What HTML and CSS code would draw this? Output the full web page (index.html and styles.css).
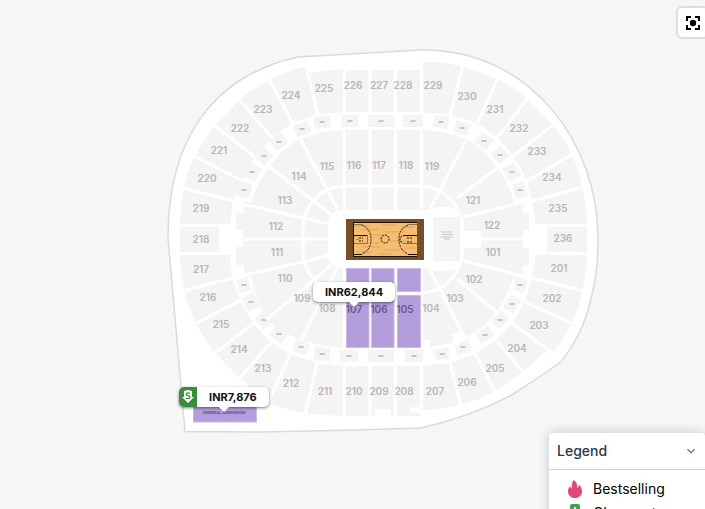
FILE: index.html
```html
<!DOCTYPE html>
<html lang="en">
<head>
<meta charset="utf-8">
<title>Seat map</title>
<link rel="stylesheet" href="styles.css">
</head>
<body>
<main class="map">
  <div class="stage">
    <svg class="venue" viewBox="0 0 705 509" role="img" aria-label="Venue sections">
      <path class="outline" d="M298 57L420 50C530 48 598 143 598 238Q598 270 593 290Q589 310 582 327Q573 346 561 362L530 383L510 396Q470 417 421 428L355 430L260 432L185 431.500L168 238C168 140 212 76 298 57Z"/>
      <!-- upper bowl -->
      <path class="block" d="M309 73L343 69V70H421V62Q443 61 462 67Q481 72 498 79Q514 88 527 99L553 125Q565 140 572 155Q579 170 582 187Q587 205 587 225V253Q587 272 582 292Q579 308 572 323L554 352H545L523 372L495 392Q478 400 460 405Q441 410 421 410V416H343Q324 416 306 413Q287 410 268 403L240 378L215 353Q204 339 196 323Q188 308 184 290Q180 273 180 253V225Q180 207 184 188Q187 172 195 157Q203 140 215 126L239 100Q253 89 269 80Q286 71 304 67Z"/>
      <path class="gap" d="M344 112H421L450 115L477 123L497 137L513 155L527 180L532 200L536 225V253L532 278L525 302L512 323L496 340L475 354L450 363L421 366H344L317 363L290 354L270 342L253 323L240 300L232 278L230 253V225L233 200L243 180L255 157L272 138L292 123L317 114Z"/>
      <g class="cut">
        <path d="M306 66L318 115M269 79L293 124M239 99L273 139M214 125L256 158M194 156L244 182M182 188L234 201M179 225.500H234M179 253.500H234M182 291L233 278M195 324L241 300M214 354L254 323M239 379L271 342M267 405L291 353M305 415L317 363M344.500 67V114M370 68V114M395.500 68V114M421.500 60V114M463 65L450 117M498 78L477 124M528 98L497 138M554 124L513 156M573 154L527 181M584 187L532 201M534 225.500H589M534 253.500H589M584 291L532 278M573 324L525 302M554 354L512 323M524 373L496 340M496 394L475 353M461 407L450 362M344.500 364V418M370 364V418M395.500 364V418M421.500 364V418"/>
      </g>
      <path class="gap" d="M219 225H235V254H219ZM535 225H547V254H535ZM375 409H391V417H375ZM410 407H422V413H410Z"/>
      <!-- suites -->
      <g id="suites"></g>
      <!-- lower bowl -->
      <path class="block" d="M344 130H421Q446 131 467 139Q484 149 497 167Q509 183 514 203L529 199V278L514 276Q508 295 497 312Q484 328 465 338Q446 346 421 348H344Q321 346 301 340Q283 333 270 323Q256 302 251 276L236 278V199L251 203Q257 182 270 166Q284 147 300 139Q321 131 344 130Z"/>
      <g class="cut">
        <path d="M235 202L303 218L330 224M266 164L311 199L332 215M300 138L338 210M236 239H330M235 277L303 262L330 255M266 320L314 280L332 264M301 341L337 268M344.500 128V350M370 128V350M395.500 128V350M421.500 128V350M468 137L430 209M501 165L457 198M524 202L463 217M464 239H530M464 261L530 278M457 279L499 314M466 340L429 268"/>
        <rect x="303" y="186" width="159" height="107" rx="42"/>
      </g>
      <path class="gap" d="M236 198H244V213H236ZM234 230H243V247H234ZM236 265H244V279H236ZM523 198H530V213H523ZM523 230H537V248H523ZM523 265H530V279H523ZM464 231H481V248H464ZM421 340H430V349H421ZM452 334L462 331L466 341L454 346Z"/>
      <rect class="gap" x="328" y="210" width="120" height="58" rx="13"/>
      <rect class="gap" x="423" y="207" width="41" height="64" rx="16"/>
      <rect class="block" x="433" y="217" width="27" height="44"/>
      <path class="mark" d="M441 232H452M442 234.500H453M441 237H452M444 239H450"/>
      <!-- available sections -->
      <path class="available" d="M346.500 268.500H369V347.500H346.500ZM371.500 268.500H394V347.500H371.500ZM397.500 268.500H420.500V291.500H397.500ZM397.500 295.500H420.500V347.500H397.500Z"/>
      <path class="divider" d="M346 293.500H395"/>
      <rect class="available" x="193.500" y="405" width="63" height="17"/>
      <!-- court -->
      <rect class="floor" x="346" y="219" width="78" height="41"/>
      <rect class="wood" x="353" y="222" width="64" height="35"/>
      <path class="grain" d="M355 226H370M382 225H396M402 227H414M360 230H378M386 232H405M354 236H366M371 235H383M389 241H410M362 247H381M384 250H399M404 248H416M356 252H372M378 254H391M397 236H409M370 243H379"/>
      <path class="court" d="M353.500 222V257M353 222.500H417M353 256.500H417M353 235.500H367M403 235.500H417M354 254.500H362M408 254.500H417"/>
      <path class="court faint" d="M353 243.500H367M367.500 235V244M403 243.500H417M354 224.500H362M408 224.500H417"/>
      <path class="dots" d="M362 225Q371 229 371 239Q371 250 362 254M408 225Q399 229 399 239Q399 250 408 254M381 239A4 4 0 1 1 389 239A4 4 0 1 1 381 239M402 236Q398 239 402 243M359 238H363M359 241H363M407 238H412M407 242H412"/>
      <path class="hoop" d="M356 239.500H359"/>
      <g id="labels"></g>
      <text class="tiny" x="224" y="414">GENERAL ADMISSION</text>
    </svg>
    <button class="price" type="button" style="left:44.4%;top:55.400%"><span class="amount">INR62,844</span></button>
    <button class="price deal" type="button" style="left:25.400%;top:76%">
      <span class="badge"><svg viewBox="0 0 18 19" aria-hidden="true"><path fill="#fff" d="M5 4L9 3L13 4V10H15L9 16L3 10H5Z"/><path class="dollar" d="M11 6.500Q9 5.200 7.500 6.500Q7 8.500 9 8.700Q11.500 9 10.800 11Q9 12.500 7 11"/></svg></span>
      <span class="amount">INR7,876</span>
    </button>
  </div>
  <button class="reset" type="button" aria-label="Reset view">
    <svg viewBox="0 0 16 16" aria-hidden="true"><path d="M2 6V2H6M10 2H14V6M14 10V14H10M6 14H2V10" fill="none" stroke="#000" stroke-width="2"/><circle cx="8" cy="8" r="3.200"/></svg>
  </button>
  <section class="legend">
    <button class="legend-head" type="button">Legend
      <svg viewBox="0 0 10 10" aria-hidden="true"><path d="M1.500 3.200L5 6.700L8.500 3.200" fill="none" stroke="#64708a" stroke-width="1.300"/></svg>
    </button>
    <ul class="legend-list">
      <li><svg viewBox="0 0 16 20" aria-hidden="true"><path fill="#e0487f" d="M6.500 1C10 3 10.500 6 10 9C11.500 8.500 11.800 7 11.800 5.500C14 7.500 15 10 15 12.500C15 16.500 12 19 8 19C4 19 1 16.500 1 12.500C1 10 2 8.500 3.200 7.300C3.500 8.500 4 9.200 4.800 9.500C4.500 6 5 3 6.500 1Z"/></svg>Bestselling</li>
      <li><svg viewBox="0 0 16 20" aria-hidden="true"><rect x="3" y="1" width="10" height="18" rx="2" fill="#43a047"/><path fill="#fff" d="M7 4H9V10H11L8 14L5 10H7Z"/></svg>Cheapest</li>
    </ul>
  </section>
</main>
<script src="map.js"></script>
</body>
</html>
```
FILE: styles.css
```css
* { box-sizing: border-box; }
body { margin: 0; background: #f5f6f8; font-family: Inter, "Liberation Sans", sans-serif; }
button { font: inherit; border: 0; padding: 0; cursor: pointer; }
.map { position: relative; min-height: 100vh; overflow: hidden; }
.stage { position: relative; width: 100%; }
.venue { display: block; width: 100%; height: auto; }
.outline { fill: #fff; stroke: #d9dadb; stroke-width: 1.5; }
.block { fill: #f4f4f4; }
.gap { fill: #fff; }
.cut { fill: none; stroke: #fff; stroke-width: 3; }
.mark { fill: none; stroke: #b9b9b9; stroke-width: 1; opacity: 0.8; }
.mark.small { stroke-width: 2; }
.available { fill: #b39ddb; stroke: #c9b9e6; stroke-width: 1; }
.divider { stroke: #fff; stroke-width: 3; }
.floor { fill: #7a4f27; }
.wood { fill: #f4bd72; }
.grain { stroke: #dda45c; stroke-width: 1; }
.court { fill: none; stroke: #1a120a; stroke-width: 1; }
.court.faint { opacity: 0.45; }
.dots { fill: none; stroke: #1a120a; stroke-width: 1; stroke-dasharray: 2 1; }
.hoop { stroke: #f0602c; }
.label { font-size: 10px; font-weight: 600; fill: #b6b6b6; text-anchor: middle; }
.label.on { fill: #6a5590; }
.tiny { font-size: 4px; font-weight: 600; fill: #5f4a85; text-anchor: middle; }
.price {
  position: absolute; display: flex; align-items: center; height: 20px;
  background: #fff; border-radius: 5px; color: #111;
  font-size: 11px; font-weight: 700; line-height: 20px;
  box-shadow: 0 1px 3px rgba(0, 0, 0, 0.5);
}
.price::after {
  content: ""; position: absolute; top: 100%; left: 50%; margin-left: -5px;
  border: 5px solid transparent; border-top-color: #fff; border-bottom: 0;
}
.amount { padding: 0 12px; }
.badge { width: 18px; height: 20px; background: #388e3c; border-radius: 5px 0 0 5px; }
.badge svg { display: block; width: 18px; height: 19px; }
.dollar { fill: none; stroke: #388e3c; stroke-width: 1.2; }
.reset {
  position: absolute; top: 6px; right: -4px; width: 33px; height: 33px;
  display: flex; align-items: center; justify-content: center;
  background: #fff; border: 2px solid #dcdee1; border-radius: 6px;
}
.reset svg { width: 16px; height: 16px; }
.legend {
  position: absolute; top: 433px; right: 0; width: 156px;
  background: #fff; border-radius: 4px 4px 0 0; box-shadow: 0 0 12px rgba(0, 0, 0, 0.2);
}
.legend-head {
  display: flex; align-items: center; justify-content: space-between; width: 100%; height: 37px;
  padding: 0 9px 0 8px; background: none; border-bottom: 1px solid #cfd2dc;
  color: #2f3542; font-size: 14px; font-weight: 500; line-height: 36px;
}
.legend-head svg { width: 10px; height: 10px; }
.legend-list { margin: 0; padding: 8px 18px; list-style: none; }
.legend-list li { display: flex; align-items: center; gap: 10px; height: 24px; font-size: 14px; line-height: 22px; padding-bottom: 2px; color: #000; }
.legend-list svg { width: 16px; height: 20px; }
```
FILE: map.js
```js
const NS = "http://www.w3.org/2000/svg";

function add(parent, name, attrs, text) {
  const el = document.createElementNS(NS, name);
  for (const key in attrs) el.setAttribute(key, attrs[key]);
  if (text) el.textContent = text;
  parent.appendChild(el);
}

// centre x, centre y, rotation, width, height
const suites = [
  [244,190,15,14,15],[252,172,30,14,15],[264,156,-48,14,13],[279,142,-34,15,13],[302,129,-20,15,12],
  [322,122,-8,16,12],[350,121,0,16,12],[381,121,0,26,12],[413,121,0,20,12],[441,122,8,15,12],
  [462,128,18,15,12],[484,141,34,15,13],[500,155,46,14,13],[512,172,-30,13,15],[520,190,-15,12,15],
  [520,285,15,12,14],[512,304,30,12,15],[500,320,-44,14,12],[485,335,-34,15,12],[463,347,-18,15,12],
  [442,354,-8,15,11],[414,356,0,18,12],[381,356,0,26,12],[349,356,0,18,12],[322,354,8,16,13],
  [301,347,22,15,13],[279,334,36,15,13],[264,320,48,14,13],[251,302,-28,13,15],[244,285,-15,12,14]
];
const suiteLayer = document.getElementById("suites");
for (const [x, y, r, w, h] of suites) {
  add(suiteLayer, "rect", { class: "block", x: x - w / 2, y: y - h / 2, width: w, height: h, transform: `rotate(${r} ${x} ${y})` });
  add(suiteLayer, "path", { class: "mark small", d: `M${x - 2.5} ${y}h5` });
}

const labels = [
  [224,291,95],[225,324,88],[226,353,85],[227,379,85],[228,403,85],[229,433,85],[230,467,96],[231,495,109],
  [232,519,128],[233,537,151],[234,552,177],[235,558,208],[236,563,238],[201,559,268],[202,552,298],[203,539,325],
  [204,517,348],[205,495,368],[206,467,382],[207,435,391],[208,404,391],[209,379,391],[210,354,391],[211,325,391],
  [212,291,383],[213,263,368],[214,239,349],[215,221,324],[216,208,297],[217,201,269],[218,201,239],[219,201,208],
  [220,207,178],[221,219,150],[222,240,128],[223,263,109],[115,327,166],[116,354,165],[117,379,165],[118,406,165],
  [119,432,166],[114,299,176],[113,285,200],[112,276,226],[111,277,252],[110,285,278],[109,302,298],[108,327,308],
  [107,354,309],[106,379,309],[105,405,309],[104,431,308],[103,455,298],[102,474,279],[101,493,252],[122,492,225],[121,473,200]
];
const labelLayer = document.getElementById("labels");
for (const [name, x, y] of labels) {
  const on = name >= 105 && name <= 107;
  add(labelLayer, "text", { class: on ? "label on" : "label", x, y: y + 4 }, String(name));
}
```
